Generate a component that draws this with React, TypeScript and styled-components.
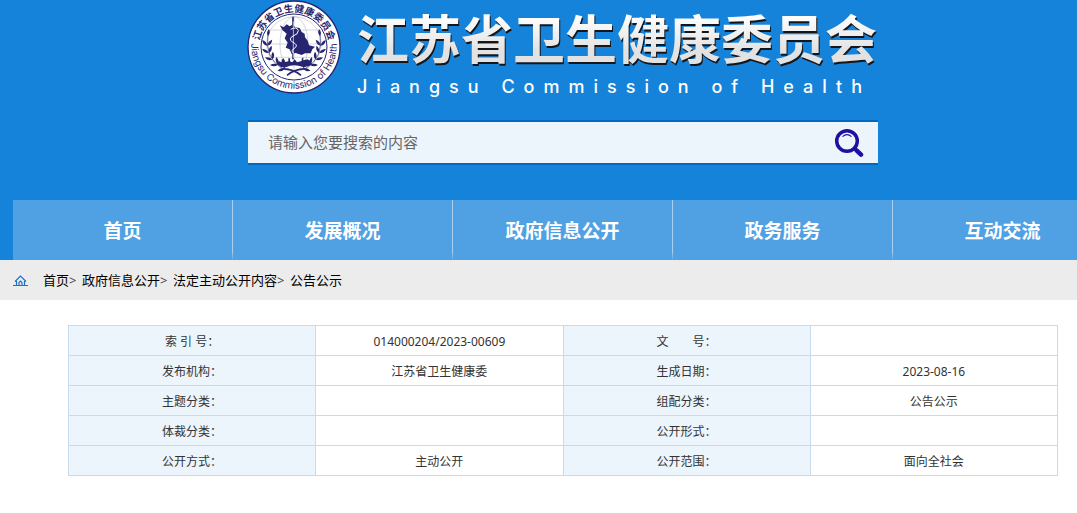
import React from "react";
import styled, { createGlobalStyle } from "styled-components";

const GlobalStyle = createGlobalStyle`
  * { box-sizing: border-box; }
  body {
    margin: 0;
    background: #fff;
    color: #333;
    font: 12px/20px "Noto Sans", "Noto Sans CJK SC", sans-serif;
  }
  a { color: inherit; text-decoration: none; }
`;

const Page = styled.div`
  overflow-x: hidden;
`;

const Container = styled.div`
  width: 1100px;
  margin-left: max(13px, calc((100% - 1100px) / 2));
`;

const Header = styled.header`
  background: #1683da;
`;

const Brand = styled.div`
  display: flex;
  gap: 16px;
  width: 632px;
  height: 120px;
  margin: 0 auto;
`;

const EmblemSvg = styled.svg`
  flex: none;
  width: 94px;
  height: 94px;
`;

const BrandText = styled.div`
  display: flex;
  flex-direction: column;
  gap: 3px;
  white-space: nowrap;
`;

const Title = styled.h1`
  margin: 0;
  font: 700 52px/73px "Noto Sans CJK SC", sans-serif;
  color: transparent;
  background: linear-gradient(#fff 20%, #e2e2e2 70%);
  background-clip: text;
  -webkit-background-clip: text;
  filter: drop-shadow(1px 2px 0 #14161c);
`;

const Subtitle = styled.p`
  margin: 0;
  color: #fff;
  font: 500 18px/22px Inter, sans-serif;
  letter-spacing: 9px;
`;

const SearchForm = styled.form`
  display: flex;
  width: 630px;
  height: 45px;
  margin: 0 auto;
  background: #ecf4fc;
  border: solid #0268bf;
  border-width: 2px 0;
`;

const SearchInput = styled.input`
  flex: 1;
  min-width: 0;
  padding: 0 20px 2px;
  border: 0;
  outline: 0;
  background: transparent;
  color: #666;
  font: 15px/20px "Noto Sans CJK SC", sans-serif;
  &::placeholder { color: #666; opacity: 1; }
`;

const SearchButton = styled.button`
  display: flex;
  align-items: center;
  justify-content: center;
  width: 58px;
  padding: 0;
  border: 0;
  background: transparent;
  cursor: pointer;
`;

const Nav = styled.nav`
  display: flex;
  margin-top: 35px;
  background: #50a1e3;
`;

const NavLink = styled.a`
  flex: 1;
  color: #fff;
  font: 700 19px/60px "Noto Sans CJK SC", sans-serif;
  text-align: center;
  border-right: 1px solid;
  border-image: linear-gradient(#a9d0f1 85%, #50a1e3) 1;
`;

const CrumbBar = styled.div`
  background: #ececec;
`;

const Crumbs = styled.nav`
  display: flex;
  align-items: center;
  height: 40px;
  color: #000;
  font-size: 13px;
`;

const CrumbIcon = styled.svg`
  width: 15px;
  height: 15px;
  margin-right: 15px;
`;

const Separator = styled.span`
  width: 13px;
  color: #444;
`;

const InfoTable = styled.table`
  width: 990px;
  margin: 25px auto 36px;
  border-collapse: collapse;
  table-layout: fixed;
  text-align: center;
`;

const cell = `
  height: 30px;
  padding: 2px 0 0;
  border: 1px solid #c8daec;
  font-weight: 400;
  white-space: pre;
`;

const LabelCell = styled.th`
  ${cell}
  background: #ecf4fc;
`;

const ValueCell = styled.td`
  ${cell}
`;

const NAVY = "#27256f";

const laurel = Array.from({ length: 5 }, (_, i) => {
  const t = ((178 - i * 17) * Math.PI) / 180;
  return { x: 161 + 80 * Math.cos(t), y: 135 + 74 * Math.sin(t), turn: -2 - i * 17 };
});

function Laurel() {
  return (
    <g fill={NAVY}>
      <path d="M83 103 Q72 174 126 205" fill="none" stroke={NAVY} strokeWidth="2" />
      {laurel.map((leaf, i) => (
        <g key={i} transform={`translate(${leaf.x} ${leaf.y}) rotate(${leaf.turn})`}>
          <path d="M0 0 Q-14 -3 -15 -18 Q-2 -14 0 0Z" />
          <path d="M0 0 Q14 -3 15 -18 Q2 -14 0 0Z" />
        </g>
      ))}
      <path d="M83 108 Q76 98 86 87 Q92 99 83 108Z" />
    </g>
  );
}

function Emblem() {
  return (
    <EmblemSvg viewBox="20 0 282 282" role="img" aria-label="江苏省卫生健康委员会">
      <defs>
        <path id="lowerArc" d="M34 122 A128 128 0 1 0 288 122" />
      </defs>
      <circle cx="161" cy="141" r="138" fill="#fff" stroke={NAVY} strokeWidth="4" />
      <circle cx="161" cy="141" r="99" fill="#fff" stroke={NAVY} strokeWidth="3" />
      <g fill="none" stroke="#a9adb8" strokeWidth="1.5">
        <circle cx="161" cy="132" r="82" />
        <ellipse cx="161" cy="132" rx="42" ry="82" />
        <path d="M161 50V214M79 132H243M91 90H231M91 172H231" />
      </g>
      <path
        fill={NAVY}
        d="M118 76 L130 82 L139 73 L148 79 L156 74 L165 82 L178 84 L184 96 L193 101 L194 112 L202 122 L206 136 L224 140 L216 148 L211 160 L194 160 L184 165 L166 159 L154 162 L148 148 L136 143 L142 128 L133 115 L139 101 L127 91 Z"
      />
      <path d="M158 50 V178" stroke={NAVY} strokeWidth="5" />
      <path d="M159 64 V174" stroke="#fff" strokeWidth="2" />
      <path
        d="M151 88 Q170 78 174 92 Q174 103 158 108 Q143 116 156 126 Q174 134 165 143 Q149 151 160 160"
        fill="none"
        stroke="#fff"
        strokeWidth="3"
      />
      <path
        fill={NAVY}
        d="M109 192 L116 183 L124 188 V179 L130 175 L135 186 L144 184 V175 H149 V184 L156 187 L163 178 L170 187 L184 183 V176 L189 172 V181 L202 178 L210 184 L216 193 Q205 202 188 201 Q160 190 136 202 Q122 204 109 192Z"
      />
      <Laurel />
      <g transform="translate(322 0) scale(-1 1)">
        <Laurel />
      </g>
      <path d="M126 207 Q155 205 182 226 M196 207 Q167 205 140 226" fill="none" stroke={NAVY} strokeWidth="5" />
      <g fill={NAVY} fontFamily="Noto Sans CJK SC, sans-serif" fontSize="29" fontWeight="700" textAnchor="middle">
        {Array.from("江苏省卫生健康委员会").map((ch, i) => (
          <text key={i} x="161" y="36" transform={`rotate(${-72 + i * 16} 161 141)`}>
            {ch}
          </text>
        ))}
      </g>
      <text fill={NAVY} fontFamily="Inter, sans-serif" fontSize="29" textAnchor="middle">
        <textPath href="#lowerArc" startOffset="50%">
          Jiangsu Commission of Health
        </textPath>
      </text>
    </EmblemSvg>
  );
}

function SearchIcon() {
  return (
    <svg width="30" height="30" viewBox="0 0 30 30" fill="none" stroke="#210f9f" aria-hidden="true">
      <circle cx="13" cy="13" r="10.3" strokeWidth="3.5" />
      <path d="M8.5 8.6 Q13 4.8 17.5 8.6" strokeWidth="1.2" />
      <path d="M20.3 20.3 L22.5 22.3" strokeWidth="3" />
      <path d="M22.5 22.3 L27 26.6" strokeWidth="4.5" strokeLinecap="round" />
    </svg>
  );
}

const navItems = ["首页", "发展概况", "政府信息公开", "政务服务", "互动交流"];
const crumbs = ["首页", "政府信息公开", "法定主动公开内容", "公告公示"];
const rows = [
  ["索 引 号：", "014000204/2023-00609", "文\u3000\u3000号：", ""],
  ["发布机构：", "江苏省卫生健康委", "生成日期：", "2023-08-16"],
  ["主题分类：", "", "组配分类：", "公告公示"],
  ["体裁分类：", "", "公开形式：", ""],
  ["公开方式：", "主动公开", "公开范围：", "面向全社会"],
];

export default function App() {
  return (
    <Page lang="zh-CN">
      <GlobalStyle />
      <Header>
        <Container>
          <Brand>
            <Emblem />
            <BrandText>
              <Title>江苏省卫生健康委员会</Title>
              <Subtitle>Jiangsu Commission of Health</Subtitle>
            </BrandText>
          </Brand>
          <SearchForm role="search" onSubmit={(e) => e.preventDefault()}>
            <SearchInput type="text" aria-label="搜索" placeholder="请输入您要搜索的内容" />
            <SearchButton type="submit" aria-label="搜索">
              <SearchIcon />
            </SearchButton>
          </SearchForm>
          <Nav>
            {navItems.map((item) => (
              <NavLink href="#" key={item}>
                {item}
              </NavLink>
            ))}
          </Nav>
        </Container>
      </Header>
      <CrumbBar>
        <Container>
          <Crumbs>
            <CrumbIcon viewBox="0 0 15 15" fill="none" stroke="#1a73c8" aria-hidden="true">
              <path d="M2 8.5 L7.5 3 L13 8.5 M3.5 8 V12.5 M11.5 8 V12.5 M6 12.5 V9.5 L7.5 8 L9 9.5 V12.5" strokeWidth="1.2" />
              <path d="M0 12.5 H15" />
            </CrumbIcon>
            {crumbs.map((crumb, i) => (
              <React.Fragment key={crumb}>
                {i > 0 && <Separator>&gt;</Separator>}
                <a href="#">{crumb}</a>
              </React.Fragment>
            ))}
          </Crumbs>
        </Container>
      </CrumbBar>
      <Container>
        <InfoTable>
          <tbody>
            {rows.map(([labelA, valueA, labelB, valueB]) => (
              <tr key={labelA}>
                <LabelCell scope="row">{labelA}</LabelCell>
                <ValueCell>{valueA}</ValueCell>
                <LabelCell scope="row">{labelB}</LabelCell>
                <ValueCell>{valueB}</ValueCell>
              </tr>
            ))}
          </tbody>
        </InfoTable>
      </Container>
    </Page>
  );
}
